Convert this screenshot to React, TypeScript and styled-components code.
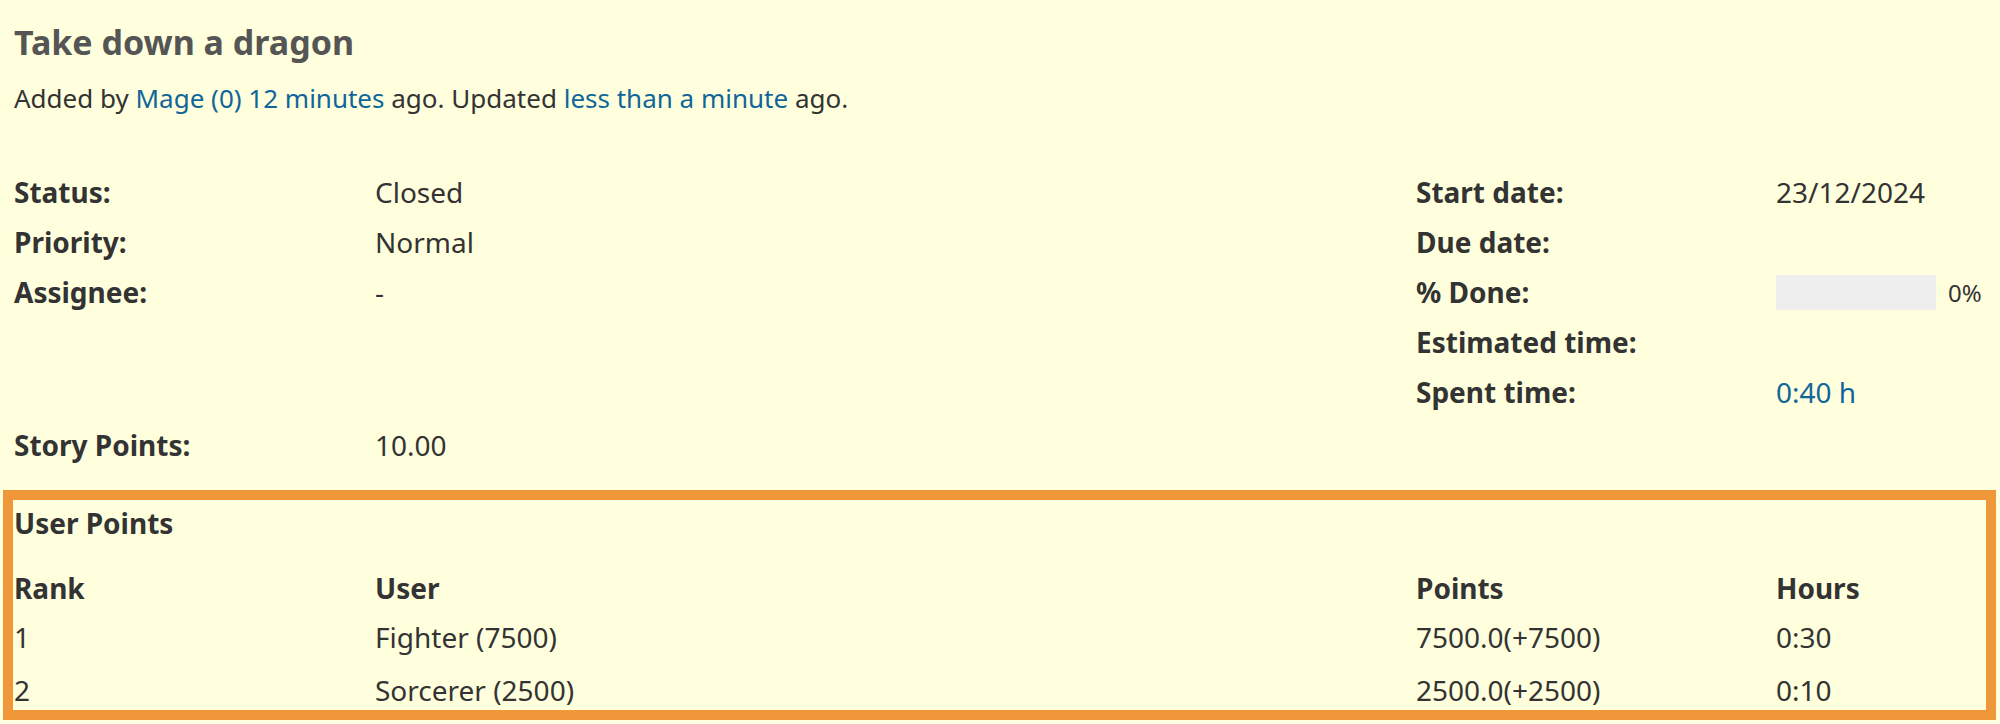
import React from "react";
import styled, { createGlobalStyle } from "styled-components";

const Global = createGlobalStyle`
  html, body { margin: 0; padding: 0; background: #ffffdd; }
  body { font-family: "Noto Sans", "Open Sans", sans-serif; color: #333; }
`;

const Page = styled.div`
  background: #ffffdd;
  width: 2000px;
  height: 724px;
  overflow: hidden;
  box-sizing: border-box;
  padding-top: 20px;
`;

const Inner = styled.div`
  padding-left: 14px;
  padding-right: 14px;
`;

const Title = styled.h3`
  margin: 0;
  font-size: 34px;
  line-height: 44px;
  font-weight: 700;
  color: #555;
`;

const Author = styled.p`
  margin: 17px 0 0;
  font-size: 26px;
  line-height: 34px;
  color: #333;
`;

const Link = styled.a`
  color: #169;
  text-decoration: none;
`;

const Split = styled.div<{ $top: number }>`
  display: grid;
  grid-template-columns: 1402px 1fr;
  margin-top: ${(p) => p.$top}px;
`;

const Column = styled.div`
  display: flex;
  flex-direction: column;
`;

const Attr = styled.div<{ $labelWidth: number }>`
  display: grid;
  grid-template-columns: ${(p) => p.$labelWidth}px 1fr;
  align-items: center;
  height: 50px;
  font-size: 28px;
`;

const Label = styled.div`
  font-weight: 700;
  color: #333;
`;

const Value = styled.div`
  display: flex;
  align-items: center;
  color: #333;
`;

const Progress = styled.div`
  width: 160px;
  height: 35px;
  background: #eeeeee;
`;

const Percent = styled.span`
  font-size: 24px;
  margin-left: 12px;
  color: #333;
`;

const Highlight = styled.div`
  margin: 20px 4px 0 3px;
  border: 10px solid #f0973a;
  padding: 2px 0 0 1px;
  height: 230px;
  box-sizing: border-box;
`;

const BoxTitle = styled.div`
  font-size: 28px;
  font-weight: 700;
  line-height: 42px;
  color: #333;
`;

const Table = styled.table`
  border-collapse: collapse;
  width: 100%;
  margin-top: 20px;
  table-layout: fixed;
  font-size: 28px;
  color: #333;
`;

const Th = styled.th<{ $w?: number }>`
  text-align: left;
  font-weight: 700;
  padding: 0;
  height: 47px;
  ${(p) => (p.$w ? `width: ${p.$w}px;` : "")}
`;

const Td = styled.td<{ $h: number }>`
  padding: 0;
  height: ${(p) => p.$h}px;
`;

export default function App() {
  return (
    <Page>
      <Global />
      <Inner>
        <Title>Take down a dragon</Title>
        <Author>
          Added by <Link href="#">Mage (0)</Link> <Link href="#">12 minutes</Link> ago. Updated{" "}
          <Link href="#">less than a minute</Link> ago.
        </Author>
        <Split $top={52}>
          <Column>
            <Attr $labelWidth={361}>
              <Label>Status:</Label>
              <Value>Closed</Value>
            </Attr>
            <Attr $labelWidth={361}>
              <Label>Priority:</Label>
              <Value>Normal</Value>
            </Attr>
            <Attr $labelWidth={361}>
              <Label>Assignee:</Label>
              <Value>-</Value>
            </Attr>
          </Column>
          <Column>
            <Attr $labelWidth={360}>
              <Label>Start date:</Label>
              <Value>23/12/2024</Value>
            </Attr>
            <Attr $labelWidth={360}>
              <Label>Due date:</Label>
              <Value />
            </Attr>
            <Attr $labelWidth={360}>
              <Label>% Done:</Label>
              <Value>
                <Progress />
                <Percent>0%</Percent>
              </Value>
            </Attr>
            <Attr $labelWidth={360}>
              <Label>Estimated time:</Label>
              <Value />
            </Attr>
            <Attr $labelWidth={360}>
              <Label>Spent time:</Label>
              <Value>
                <Link href="#">0:40 h</Link>
              </Value>
            </Attr>
          </Column>
        </Split>
        <Split $top={3}>
          <Column>
            <Attr $labelWidth={361}>
              <Label>Story Points:</Label>
              <Value>10.00</Value>
            </Attr>
          </Column>
          <Column />
        </Split>
      </Inner>
      <Highlight>
        <BoxTitle>User Points</BoxTitle>
        <Table>
          <thead>
            <tr>
              <Th $w={361}>Rank</Th>
              <Th $w={1041}>User</Th>
              <Th $w={360}>Points</Th>
              <Th>Hours</Th>
            </tr>
          </thead>
          <tbody>
            <tr>
              <Td $h={52}>1</Td>
              <Td $h={52}>Fighter (7500)</Td>
              <Td $h={52}>7500.0(+7500)</Td>
              <Td $h={52}>0:30</Td>
            </tr>
            <tr>
              <Td $h={54}>2</Td>
              <Td $h={54}>Sorcerer (2500)</Td>
              <Td $h={54}>2500.0(+2500)</Td>
              <Td $h={54}>0:10</Td>
            </tr>
          </tbody>
        </Table>
      </Highlight>
    </Page>
  );
}
